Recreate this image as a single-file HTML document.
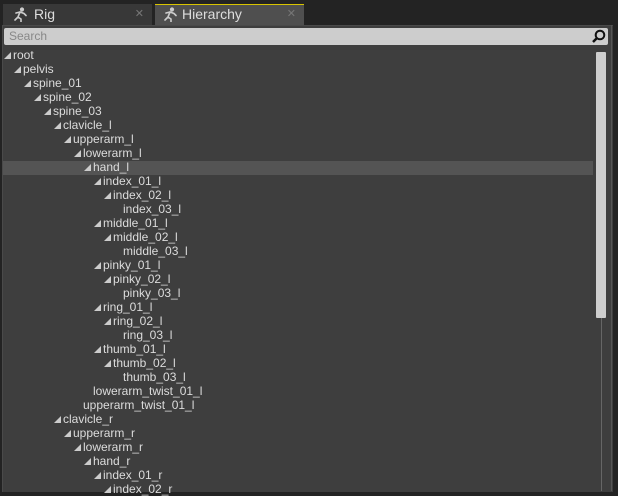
<!DOCTYPE html>
<html><head><style>
body{margin:0;width:618px;height:491px;background:#232323;overflow:hidden;font-family:"Liberation Sans",sans-serif;position:relative}
.tab{position:absolute;top:4px;height:21px;box-sizing:border-box;color:#ddd;font-size:14px;line-height:21px}
.tab .x{position:absolute;right:8px;top:0;color:#777;font-size:11px}
.panel{position:absolute;left:2px;top:25px;width:610px;height:466px;background:#3e3e3e;border-left:1px solid #4a4a4a;border-top:1px solid #4a4a4a}
.search{position:absolute;left:4px;top:28px;width:604px;height:17px;background:#cdcdcd;border-radius:2px;color:#888;font-size:12px;line-height:17px;box-sizing:border-box;padding-left:5px}
.row{position:absolute;height:14px;line-height:14px;font-size:12px;color:#dcdcdc;white-space:nowrap}
.tri{position:absolute;width:0;height:0;border-left:7px solid transparent;border-bottom:7px solid #ccc}
</style></head><body>
<div class="tab" style="left:3px;width:149px;background:#383838;">
<svg style="position:absolute;left:9px;top:3px" width="16" height="15" viewBox="0 0 16 15"><g stroke="#ccc" stroke-width="1.6" fill="none" stroke-linecap="round"><circle cx="10" cy="2.5" r="1.3" fill="#ccc"/><path d="M8 5l-2 5 3 2v3M8 5l4 1.5 2 2M6 10l-3 3M4 6l4-1"/></g></svg>
<span style="position:absolute;left:31px">Rig</span><span class="x">✕</span></div>
<div class="tab" style="left:155px;width:149px;background:#4f4f4f;border-top:1px solid #d8c400;">
<svg style="position:absolute;left:7px;top:2px" width="16" height="15" viewBox="0 0 16 15"><g stroke="#ccc" stroke-width="1.6" fill="none" stroke-linecap="round"><circle cx="10" cy="2.5" r="1.3" fill="#ccc"/><path d="M8 5l-2 5 3 2v3M8 5l4 1.5 2 2M6 10l-3 3M4 6l4-1"/></g></svg>
<span style="position:absolute;left:27px;top:-1px">Hierarchy</span><span class="x" style="top:-1px">✕</span></div>
<div class="panel"></div>
<div class="search">Search
<svg style="position:absolute;right:2px;top:1px" width="15" height="15" viewBox="0 0 15 15"><circle cx="9" cy="6" r="4.3" stroke="#111" stroke-width="2" fill="none"/><path d="M6 9l-4 4" stroke="#111" stroke-width="2.5"/></svg></div>
<div style="position:absolute;left:3px;top:161px;width:590px;height:14px;background:#545454"></div>
<div style="position:absolute;left:596px;top:52px;width:10px;height:266px;background:#cecece;border-radius:1px"></div>
<div style="position:absolute;left:601px;top:318px;width:1px;height:173px;background:#666"></div>
<div style="position:absolute;left:611px;top:25px;width:1px;height:466px;background:#555"></div>
<div id="t"></div>
<script>
var d=[["root",0,1],["pelvis",1,1],["spine_01",2,1],["spine_02",3,1],["spine_03",4,1],["clavicle_l",5,1],["upperarm_l",6,1],["lowerarm_l",7,1],["hand_l",8,1],["index_01_l",9,1],["index_02_l",10,1],["index_03_l",11,0],["middle_01_l",9,1],["middle_02_l",10,1],["middle_03_l",11,0],["pinky_01_l",9,1],["pinky_02_l",10,1],["pinky_03_l",11,0],["ring_01_l",9,1],["ring_02_l",10,1],["ring_03_l",11,0],["thumb_01_l",9,1],["thumb_02_l",10,1],["thumb_03_l",11,0],["lowerarm_twist_01_l",8,0],["upperarm_twist_01_l",7,0],["clavicle_r",5,1],["upperarm_r",6,1],["lowerarm_r",7,1],["hand_r",8,1],["index_01_r",9,1],["index_02_r",10,1]];
var h="";d.forEach(function(r,i){var y=48+14*i,l=r[1]*10;
if(r[2])h+='<div class="tri" style="left:'+(4+l)+'px;top:'+(y+4)+'px"></div>';
h+='<div class="row" style="left:'+(13+l)+'px;top:'+y+'px">'+r[0]+'</div>';});
document.getElementById("t").innerHTML=h;
</script>
</body></html>
